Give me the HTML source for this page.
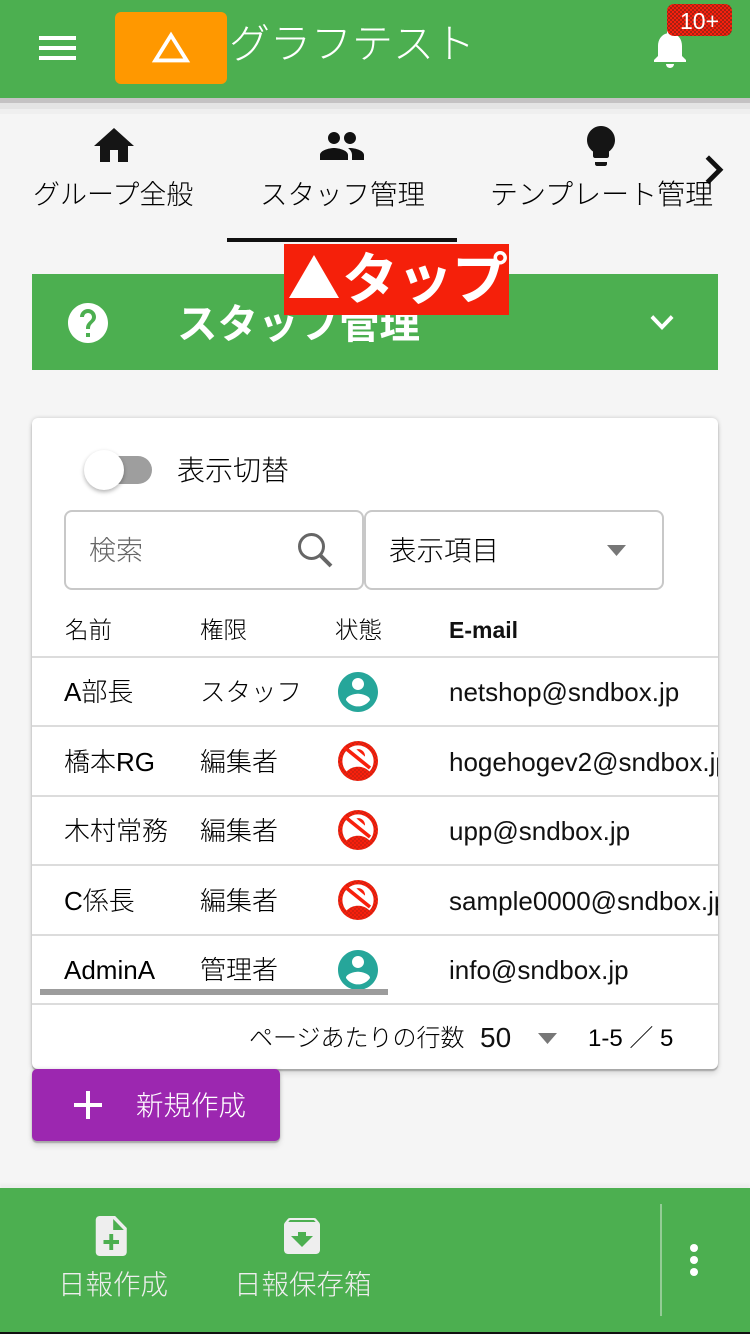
<!DOCTYPE html>
<html lang="ja">
<head>
<meta charset="utf-8">
<style>
html,body{margin:0;padding:0;}
body{width:750px;height:1334px;position:relative;overflow:hidden;background:#f5f5f5;font-family:"Liberation Sans","Noto Sans CJK JP",sans-serif;color:#000;font-weight:300;}
.a{position:absolute;white-space:nowrap;}
.t{position:absolute;white-space:nowrap;line-height:1;}
svg{position:absolute;display:block;}
.line{position:absolute;left:32px;width:686px;height:2px;background:#dcdcdc;}
.dot{background-color:#f8200c;background-image:radial-gradient(#222 0.5px,transparent 0.9px),radial-gradient(#222 0.5px,transparent 0.9px);background-size:4px 4px;background-position:0 0,2px 2px;}
</style>
</head>
<body>
<!-- Header -->
<div class="a" style="left:0;top:0;width:750px;height:98px;background:#4caf50;box-shadow:0 5px 0 #c4c2c3,0 11px 0 #e4e4e4,0 16px 0 #efefef;"></div>
<div class="a" style="left:39px;top:36px;width:37px;height:4px;background:#fff;"></div>
<div class="a" style="left:39px;top:46px;width:37px;height:4px;background:#fff;"></div>
<div class="a" style="left:39px;top:56px;width:37px;height:4px;background:#fff;"></div>
<div class="a" style="left:115px;top:12px;width:112px;height:72px;background:#ff9800;border-radius:6px;"></div>
<svg style="left:148px;top:24px" width="46" height="46" viewBox="0 0 24 24"><path d="M12 7.770L18.390 18H5.610L12 7.770M12 4L2 20h20L12 4z" fill="#fff"/></svg>
<div class="t" style="left:229px;top:24px;font-size:41px;color:#fff;">グラフテスト</div>
<svg style="left:646px;top:24px" width="48" height="48" viewBox="0 0 24 24"><path d="M12 22c1.100 0 2-.9 2-2h-4c0 1.100.89 2 2 2zm6-6v-5c0-3.070-1.640-5.640-4.500-6.320V4c0-.83-.67-1.500-1.500-1.500s-1.500.67-1.500 1.500v.68C7.630 5.360 6 7.920 6 11v5l-2 2v1h16v-1l-2-2z" fill="#fff"/></svg>
<div class="a dot" style="left:667px;top:4px;width:65px;height:32px;border-radius:7px;"></div>
<div class="t" style="left:680px;top:10px;font-size:23px;color:#fff;">10+</div>

<!-- Tabs -->
<svg style="left:90px;top:122px" width="48" height="48" viewBox="0 0 24 24"><path d="M10 20v-6h4v6h5v-8h3L12 3 2 12h3v8z" fill="#151515"/></svg>
<svg style="left:318px;top:122px" width="48" height="48" viewBox="0 0 24 24"><path d="M16 11c1.660 0 2.990-1.340 2.990-3S17.660 5 16 5c-1.660 0-3 1.340-3 3s1.340 3 3 3zm-8 0c1.660 0 2.990-1.340 2.990-3S9.660 5 8 5C6.340 5 5 6.340 5 8s1.340 3 3 3zm0 2c-2.330 0-7 1.170-7 3.500V19h14v-2.500c0-2.330-4.670-3.500-7-3.500zm8 0c-.29 0-.62.02-.97.05 1.160.84 1.970 1.970 1.970 3.450V19h6v-2.500c0-2.330-4.670-3.500-7-3.500z" fill="#111"/></svg>
<svg style="left:577px;top:122px" width="48" height="48" viewBox="0 0 24 24"><path d="M9 21c0 .55.45 1 1 1h4c.55 0 1-.45 1-1v-1H9v1zm3-19C8.140 2 5 5.140 5 9c0 2.380 1.190 4.470 3 5.740V17c0 .55.45 1 1 1h6c.55 0 1-.45 1-1v-2.260c1.810-1.270 3-3.360 3-5.740 0-3.860-3.140-7-7-7z" fill="#151515"/></svg>
<svg style="left:685.400px;top:140.600px" width="57.600" height="57.600" viewBox="0 0 24 24"><path d="M10 6L8.590 7.410 13.170 12l-4.580 4.590L10 18l6-6z" fill="#111"/></svg>
<div class="t" style="left:33px;top:182px;font-size:27px;">グループ全般</div>
<div class="t" style="left:260px;top:181px;font-size:27.500px;">スタッフ管理</div>
<div class="t" style="left:490px;top:181px;font-size:28px;">テンプレート管理</div>
<div class="a" style="left:227px;top:238px;width:230px;height:4px;background:#111;"></div>

<!-- Accordion -->
<div class="a" style="left:32px;top:274px;width:686px;height:96px;background:#4caf50;"></div>
<svg style="left:64px;top:299px" width="48" height="48" viewBox="0 0 24 24"><path d="M12 2C6.480 2 2 6.480 2 12s4.480 10 10 10 10-4.480 10-10S17.520 2 12 2zm1 17h-2v-2h2v2zm2.070-7.750l-.9.920C13.450 12.900 13 13.500 13 15h-2v-.5c0-1.100.45-2.100 1.170-2.830l1.240-1.260c.37-.36.59-.86.59-1.410 0-1.100-.9-2-2-2s-2 .9-2 2H8c0-2.210 1.790-4 4-4s4 1.790 4 4c0 .88-.36 1.680-.93 2.250z" fill="#fff"/></svg>
<div class="t" style="left:177px;top:304px;font-size:40.500px;color:#fff;font-weight:700;">スタッフ管理</div>
<svg style="left:639px;top:298px" width="46" height="48" viewBox="0 0 24 24" preserveAspectRatio="none"><path d="M16.590 8.590L12 13.170 7.410 8.590 6 10l6 6 6-6z" fill="#fff"/></svg>
<div class="a" style="left:284px;top:244px;width:225px;height:71px;background:#f5200a;"></div>
<svg style="left:284px;top:244px" width="60" height="60" viewBox="0 0 60 60"><path d="M30 11 L55 54 H5 Z" fill="#fff"/></svg>
<div class="t" style="left:342px;top:252px;font-size:56px;color:#fff;font-weight:700;letter-spacing:-1px;">タップ</div>

<!-- Card -->
<div class="a" style="left:32px;top:418px;width:686px;height:651px;background:#fff;border-radius:6px;box-shadow:0 2px 1px #a8a8a8,0 0 4px rgba(0,0,0,.18),0 5px 6px rgba(0,0,0,.1);"></div>
<div class="a" style="left:88px;top:456px;width:64px;height:28px;border-radius:14px;background:#9e9e9e;"></div>
<div class="a" style="left:84px;top:450px;width:40px;height:40px;border-radius:20px;background:#fff;box-shadow:0 2px 4px rgba(0,0,0,.3);"></div>
<div class="t" style="left:177px;top:457px;font-size:28px;">表示切替</div>

<div class="a" style="left:64px;top:510px;width:296px;height:76px;border:2px solid #c8c8c8;border-radius:8px;background:#fff;"></div>
<div class="t" style="left:89px;top:538px;font-size:27px;color:#666;">検索</div>
<svg style="left:292px;top:527px" width="48" height="48" viewBox="0 0 48 48"><circle cx="19.500" cy="19.500" r="12" fill="none" stroke="#666" stroke-width="3"/><path d="M28 28 L39 39" stroke="#666" stroke-width="4"/></svg>
<div class="a" style="left:364px;top:510px;width:296px;height:76px;border:2px solid #c8c8c8;border-radius:8px;background:#fff;"></div>
<div class="t" style="left:389px;top:537px;font-size:27.500px;">表示項目</div>
<svg style="left:607px;top:545px" width="19" height="11" viewBox="0 0 19 11"><path d="M0 0 H19 L9.500 11 Z" fill="#777"/></svg>

<!-- Table -->
<div class="t" style="left:65px;top:619px;font-size:23.500px;">名前</div>
<div class="t" style="left:200px;top:619px;font-size:23.500px;">権限</div>
<div class="t" style="left:335px;top:619px;font-size:23.500px;">状態</div>
<div class="t" style="left:449px;top:619px;font-size:23px;font-weight:700;color:#111;">E-mail</div>
<div class="line" style="top:656px"></div>
<div class="line" style="top:725px"></div>
<div class="line" style="top:795px"></div>
<div class="line" style="top:864px"></div>
<div class="line" style="top:934px"></div>
<div class="line" style="top:1003px"></div>

<div class="t" style="left:64px;top:679px;font-size:26px;">A部長</div>
<div class="t" style="left:200px;top:681px;font-size:25.500px;">スタッフ</div>
<div class="t" style="left:449px;top:679px;font-size:26px;color:#111;">netshop@sndbox.jp</div>

<div class="t" style="left:64px;top:749px;font-size:26px;">橋本RG</div>
<div class="t" style="left:200px;top:749px;font-size:26px;">編集者</div>
<div class="a" style="left:449px;top:748px;width:269px;height:30px;overflow:hidden;font-size:26px;line-height:28px;color:#111;">hogehogev2@sndbox.jp</div>

<div class="t" style="left:64px;top:818px;font-size:26px;">木村常務</div>
<div class="t" style="left:200px;top:818px;font-size:26px;">編集者</div>
<div class="t" style="left:449px;top:818px;font-size:26px;color:#111;">upp@sndbox.jp</div>

<div class="t" style="left:64px;top:888px;font-size:26px;">C係長</div>
<div class="t" style="left:200px;top:888px;font-size:26px;">編集者</div>
<div class="a" style="left:449px;top:887px;width:269px;height:30px;overflow:hidden;font-size:26px;line-height:28px;color:#111;">sample0000@sndbox.jp</div>

<div class="t" style="left:64px;top:957px;font-size:26px;">AdminA</div>
<div class="t" style="left:200px;top:957px;font-size:26px;">管理者</div>
<div class="t" style="left:449px;top:957px;font-size:26px;color:#111;">info@sndbox.jp</div>

<!-- status icons -->
<svg style="left:334px;top:668px" width="48" height="48" viewBox="0 0 24 24"><path d="M12 2C6.480 2 2 6.480 2 12s4.480 10 10 10 10-4.480 10-10S17.520 2 12 2zm0 3c1.660 0 3 1.340 3 3s-1.340 3-3 3-3-1.340-3-3 1.340-3 3-3zm0 14.200c-2.500 0-4.710-1.280-6-3.220.03-1.990 4-3.080 6-3.080 1.990 0 5.970 1.090 6 3.080-1.290 1.940-3.500 3.220-6 3.220z" fill="#26a69a"/></svg>
<svg style="left:334px;top:946px" width="48" height="48" viewBox="0 0 24 24"><path d="M12 2C6.480 2 2 6.480 2 12s4.480 10 10 10 10-4.480 10-10S17.520 2 12 2zm0 3c1.660 0 3 1.340 3 3s-1.340 3-3 3-3-1.340-3-3 1.340-3 3-3zm0 14.200c-2.500 0-4.710-1.280-6-3.220.03-1.990 4-3.080 6-3.080 1.990 0 5.970 1.090 6 3.080-1.290 1.940-3.500 3.220-6 3.220z" fill="#26a69a"/></svg>
<svg style="left:334px;top:737px" width="48" height="48" viewBox="0 0 24 24"><defs><pattern id="p" width="2" height="2" patternUnits="userSpaceOnUse"><rect width="2" height="2" fill="#f8200c"/><circle cx=".5" cy=".5" r=".22" fill="#222"/><circle cx="1.500" cy="1.500" r=".22" fill="#222"/></pattern></defs><path d="M12 2a10 10 0 1 0 0 20a10 10 0 1 0 0-20zM12 4.200a7.800 7.800 0 1 1 0 15.600a7.800 7.800 0 1 1 0-15.600z" fill="url(#p)" fill-rule="evenodd"/><path d="M6 17.500C8 15.500 10 14.900 12 14.900S16 15.500 18 17.500L17 19A8.500 8.500 0 0 1 7 19Z" fill="url(#p)"/><path d="M11.200 6.200C13.500 5.500 15.700 7.500 15.500 9.800Z" fill="#f8200c"/><path d="M5 5L18 15.500" stroke="#f8200c" stroke-width="1.800"/></svg>
<svg style="left:334px;top:806px" width="48" height="48" viewBox="0 0 24 24"><path d="M12 2a10 10 0 1 0 0 20a10 10 0 1 0 0-20zM12 4.200a7.800 7.800 0 1 1 0 15.600a7.800 7.800 0 1 1 0-15.600z" fill="url(#p)" fill-rule="evenodd"/><path d="M6 17.500C8 15.500 10 14.900 12 14.900S16 15.500 18 17.500L17 19A8.500 8.500 0 0 1 7 19Z" fill="url(#p)"/><path d="M11.200 6.200C13.500 5.500 15.700 7.500 15.500 9.800Z" fill="#f8200c"/><path d="M5 5L18 15.500" stroke="#f8200c" stroke-width="1.800"/></svg>
<svg style="left:334px;top:876px" width="48" height="48" viewBox="0 0 24 24"><path d="M12 2a10 10 0 1 0 0 20a10 10 0 1 0 0-20zM12 4.200a7.800 7.800 0 1 1 0 15.600a7.800 7.800 0 1 1 0-15.600z" fill="url(#p)" fill-rule="evenodd"/><path d="M6 17.500C8 15.500 10 14.900 12 14.900S16 15.500 18 17.500L17 19A8.500 8.500 0 0 1 7 19Z" fill="url(#p)"/><path d="M11.200 6.200C13.500 5.500 15.700 7.500 15.500 9.800Z" fill="#f8200c"/><path d="M5 5L18 15.500" stroke="#f8200c" stroke-width="1.800"/></svg>
<div class="a" style="left:40px;top:989px;width:348px;height:6px;background:#9c9c9c;"></div>

<!-- pagination -->
<div class="t" style="left:249px;top:1027px;font-size:24px;">ページあたりの行数</div>
<div class="t" style="left:480px;top:1024px;font-size:28px;color:#111;">50</div>
<svg style="left:538px;top:1033px" width="19" height="11" viewBox="0 0 19 11"><path d="M0 0 H19 L9.500 11 Z" fill="#777"/></svg>
<div class="t" style="left:588px;top:1027px;font-size:24px;">1-5 ／ 5</div>

<!-- Create button -->
<div class="a" style="left:32px;top:1069px;width:248px;height:72px;background:#9c27b0;border-radius:5px;box-shadow:0 2px 1px #a8a8a8,0 0 4px rgba(0,0,0,.15),0 5px 6px rgba(0,0,0,.1);"></div>
<svg style="left:64px;top:1081px" width="48" height="48" viewBox="0 0 24 24"><path d="M19 13h-6v6h-2v-6H5v-2h6V5h2v6h6v2z" fill="#fff"/></svg>
<div class="t" style="left:136px;top:1092px;font-size:27.500px;color:#fff;">新規作成</div>

<!-- Footer -->
<div class="a" style="left:0;top:1188px;width:750px;height:144px;background:#4caf50;box-shadow:0 -4px 2px #ededed;"></div>
<div class="a" style="left:0;top:1332px;width:750px;height:2px;background:#111;"></div>
<svg style="left:88.250px;top:1212px" width="46.500" height="48" viewBox="0 0 24 24" preserveAspectRatio="none"><path d="M14 2H6c-1.100 0-2 .9-2 2v16c0 1.100.9 2 2 2h12c1.100 0 2-.9 2-2V8l-6-6zm2 14h-3v3h-2v-3H8v-2h3v-3h2v3h3v2zm-3-7V3.500L18.500 9H13z" fill="#eee"/></svg>
<svg style="left:278px;top:1212px" width="48" height="48" viewBox="0 0 24 24"><path d="M20.540 5.230l-1.390-1.680C18.880 3.210 18.470 3 18 3H6c-.47 0-.88.21-1.160.55L3.460 5.230C3.170 5.570 3 6.020 3 6.500V19c0 1.100.9 2 2 2h14c1.100 0 2-.9 2-2V6.500c0-.48-.17-.93-.46-1.270zM12 17.500L6.500 12H10v-2h4v2h3.500L12 17.500zM5.120 5l.81-1h12l.94 1H5.120z" fill="#eee"/></svg>
<div class="t" style="left:58px;top:1271px;font-size:27.500px;color:#eee;">日報作成</div>
<div class="t" style="left:234px;top:1271px;font-size:27.500px;color:#eee;">日報保存箱</div>
<div class="a" style="left:660px;top:1204px;width:2px;height:112px;background:#94cc96;"></div>
<div class="a" style="left:690px;top:1244px;width:8px;height:8px;border-radius:50%;background:#fff;"></div>
<div class="a" style="left:690px;top:1256px;width:8px;height:8px;border-radius:50%;background:#fff;"></div>
<div class="a" style="left:690px;top:1268px;width:8px;height:8px;border-radius:50%;background:#fff;"></div>
</body>
</html>
